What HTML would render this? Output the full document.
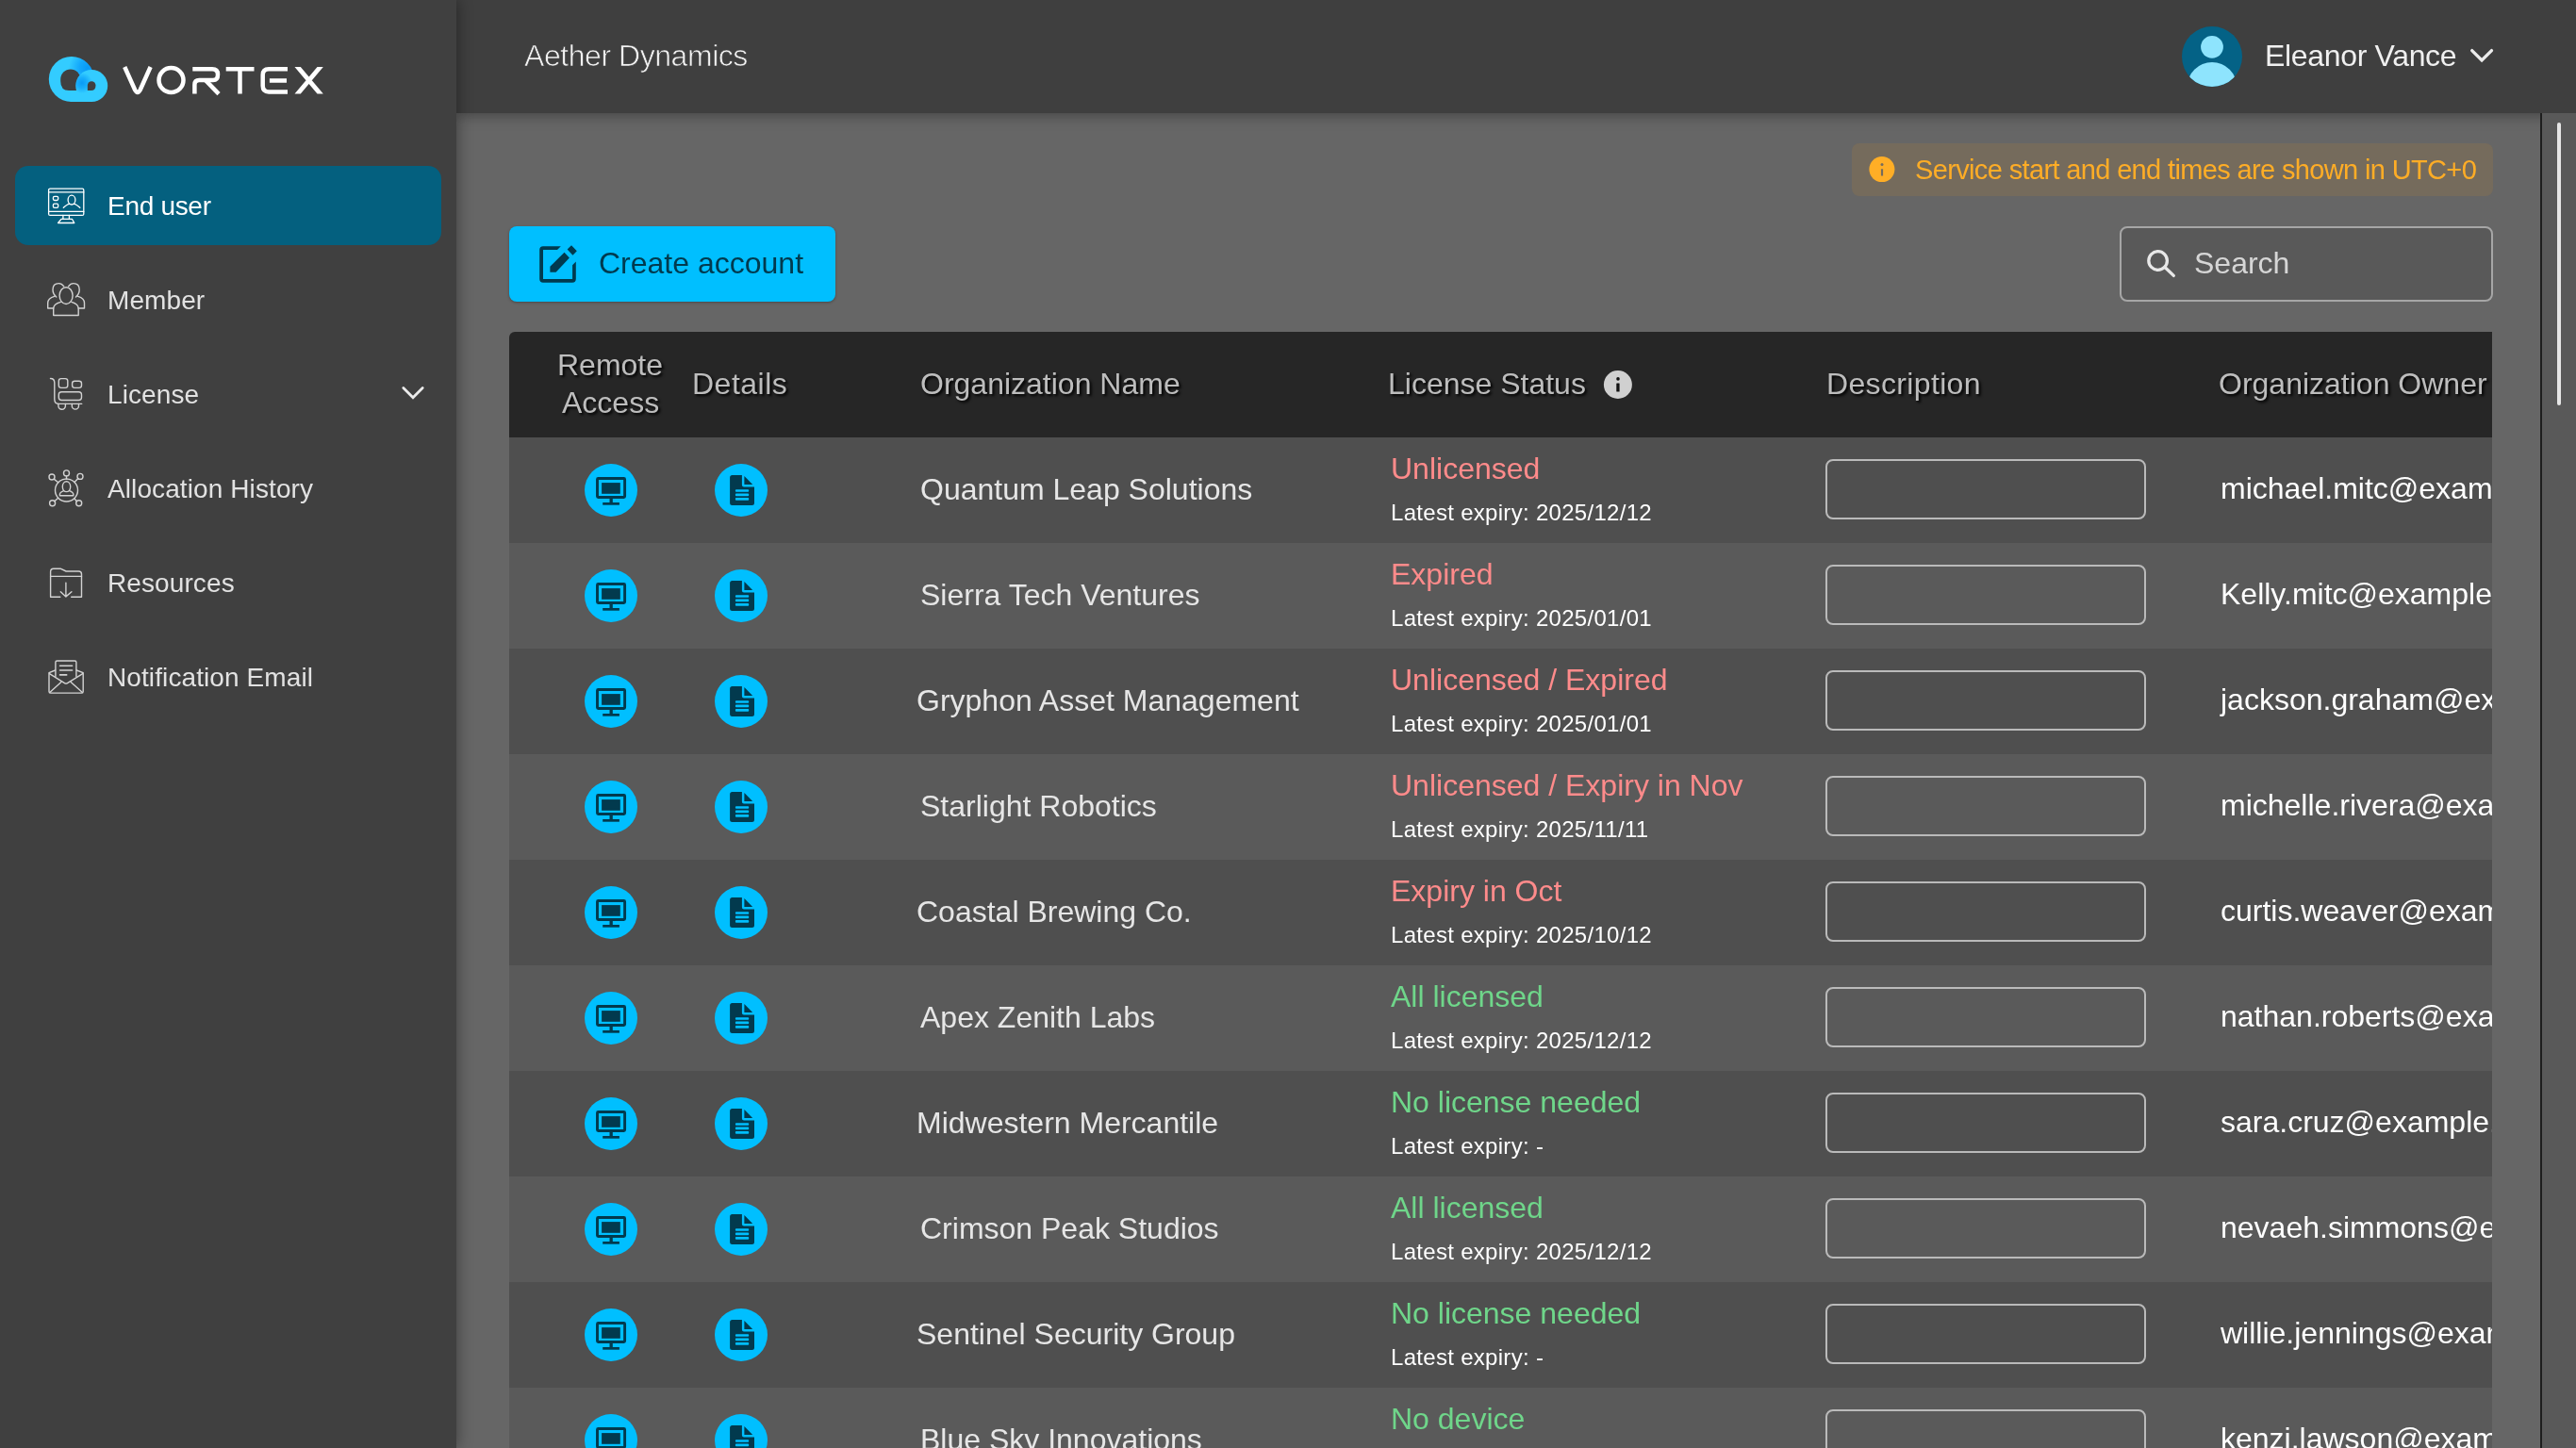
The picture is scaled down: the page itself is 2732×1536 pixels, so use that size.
<!DOCTYPE html><html><head><meta charset="utf-8"><style>
*{margin:0;padding:0;box-sizing:border-box}
html,body{width:2732px;height:1536px;overflow:hidden;background:#666;font-family:"Liberation Sans",sans-serif;-webkit-font-smoothing:antialiased}
.t{position:absolute;line-height:1;white-space:nowrap;will-change:transform}
.a{position:absolute}
#side{position:absolute;left:0;top:0;width:484px;height:1536px;background:#404040;z-index:3;box-shadow:2px 0 14px rgba(0,0,0,.35)}
#head{position:absolute;left:484px;top:0;width:2248px;height:120px;background:#3f3f3f;z-index:2;box-shadow:0 2px 14px rgba(0,0,0,.35)}
#main{position:absolute;left:484px;top:120px;width:2248px;height:1416px;background:#666;overflow:hidden;z-index:1}
.row{position:absolute;left:540px;width:2103px;height:112px;overflow:hidden}
.ic{position:absolute;width:56px;height:56px;border-radius:50%;background:#00bfff}
.desc{position:absolute;left:1936px;width:340px;height:64px;border:2px solid #bababa;border-radius:8px}
</style></head><body>
<div id="side">
<svg class="a" style="left:0;top:0" width="484" height="130" viewBox="0 0 484 130">
<defs>
<radialGradient id="g1" gradientUnits="userSpaceOnUse" cx="93" cy="72" r="20"><stop offset="0" stop-color="#0898f5"/><stop offset="0.45" stop-color="#14a8fb"/><stop offset="1" stop-color="#33ccff"/></radialGradient>
<radialGradient id="g2" gradientUnits="userSpaceOnUse" cx="87" cy="88" r="11"><stop offset="0" stop-color="#0a9af6"/><stop offset="0.5" stop-color="#18aefc"/><stop offset="1" stop-color="#33ccff"/></radialGradient>
</defs>
<circle cx="75.8" cy="84" r="24" fill="url(#g1)"/>
<rect x="74.6" y="84" width="22.4" height="24" fill="#33ccff"/>
<path d="M64.2 84 A10.6 10.6 0 0 1 85.4 84 V96 H73 Q64.2 96 64.2 86 Z" fill="#404040"/>
<circle cx="97.2" cy="91" r="17" fill="url(#g2)"/>
<path d="M92.8 96 V90.7 A4.35 4.35 0 0 1 101.5 90.7 Q101.5 96 96.5 96 Z" fill="#404040"/>
<g fill="none" stroke="#fff" stroke-width="4.5" stroke-linejoin="round">
<path d="M132.2 71 L143.2 95.5 Q145.9 100.5 148.6 95.5 L159.6 71" stroke-linecap="butt"/>
<circle cx="181.5" cy="85" r="13"/>
<path d="M206.4 99.6 V90 Q206.4 85.1 211.3 85.1 H226 Q231 85.1 231 79 Q231 73.2 225 73.2 H204.3"/>
<path d="M218 85.1 L232 99.6" stroke-linejoin="miter"/>
<path d="M239.7 73.2 H269.5 M254.5 73.2 V99.6"/>
<path d="M305 73.2 H285 Q278.7 73.2 278.7 79.5 V91 Q278.7 97.4 285 97.4 H305 M285.9 85.4 H304"/>
</g><g fill="#fff"><path d="M312.5 71 H318.8 L342.8 99.5 H336.5 Z M336.5 71 H342.8 L318.8 99.5 H312.5 Z"/>
</g>
</svg>
<div class="a" style="left:16px;top:176px;width:452px;height:84px;background:#04607f;border-radius:14px"></div>
<div class="t" style="left:114px;top:204.8px;font-size:28px;color:#ffffff;letter-spacing:-0.3px">End user</div>
<div class="t" style="left:114px;top:304.8px;font-size:28px;color:#e2e2e2;letter-spacing:0.1px">Member</div>
<div class="t" style="left:114px;top:404.8px;font-size:28px;color:#e2e2e2;letter-spacing:0.1px">License</div>
<div class="t" style="left:114px;top:504.8px;font-size:28px;color:#e2e2e2;letter-spacing:0.1px">Allocation History</div>
<div class="t" style="left:114px;top:604.8px;font-size:28px;color:#e2e2e2;letter-spacing:0.1px">Resources</div>
<div class="t" style="left:114px;top:704.8px;font-size:28px;color:#e2e2e2;letter-spacing:0.1px">Notification Email</div>
<svg class="a" style="left:44px;top:192px" width="54" height="54" viewBox="0 0 54 54"><g fill="none" stroke="#ffffff" stroke-width="1.3" stroke-linecap="round" stroke-linejoin="round">
<rect x="7.6" y="8.1" width="37.2" height="28.3" rx="1.5"/>
<path d="M7.6 11.9 H44.8 M7.6 32.4 H44.8"/>
<rect x="12.4" y="16.4" width="5.3" height="4.1" rx="1.4"/>
<rect x="12.4" y="24.2" width="5.3" height="4.1" rx="1.4"/>
<ellipse cx="32" cy="20.1" rx="3.9" ry="4.9"/>
<path d="M23.3 28.3 Q27 24.5 29.8 24.3 M34.3 24.3 Q37 24.5 40.8 28.3"/>
<path d="M22.9 36.4 V40.3 M29.4 36.4 V40.3 M21 40.3 H32.4 L34.8 44.5 H17.6 Z"/>
</g></svg>
<svg class="a" style="left:44px;top:292px" width="54" height="54" viewBox="0 0 54 54"><g fill="none" stroke="#d2d2d2" stroke-width="1.4" stroke-linecap="round" stroke-linejoin="round">
<ellipse cx="26.1" cy="21.6" rx="7" ry="8.9"/>
<path d="M20.3 28.4 Q12.7 30.5 12.7 35.5 V42.5 H39.2 V35.5 Q39.2 30.5 31.9 28.4"/>
<path d="M23.8 11.8 Q21.5 8.6 18.3 8.6 Q12 8.6 12 15.3 Q12 19.8 15.7 23"/>
<path d="M13.8 22.4 Q6.7 24.5 6.7 29.2 V35 H12.7"/>
<path d="M28.5 11.8 Q30.8 8.6 33.9 8.6 Q40.2 8.6 40.2 15.3 Q40.2 19.8 36.5 23"/>
<path d="M38.6 22.4 Q45.5 24.5 45.5 29.2 V35 H39.2"/>
</g></svg>
<svg class="a" style="left:44px;top:392px" width="54" height="54" viewBox="0 0 54 54"><g fill="none" stroke="#d2d2d2" stroke-width="1.4" stroke-linecap="round" stroke-linejoin="round">
<path d="M9.5 9.5 Q13.8 9.5 13.8 14 V31.5 Q13.8 36.4 18.6 36.4 H42.7"/>
<rect x="18.3" y="9.6" width="9.5" height="9.8" rx="2.6"/>
<rect x="32.6" y="12.2" width="9.9" height="7.2" rx="2.6"/>
<rect x="18.3" y="23.8" width="24.2" height="8.7" rx="3"/>
<path d="M17.9 36.4 V38.5 A3.75 3.75 0 0 0 25.4 38.5 V36.4"/>
<path d="M32.3 36.4 V38.5 A3.6 3.6 0 0 0 39.5 38.5 V36.4"/>
</g></svg>
<svg class="a" style="left:44px;top:492px" width="54" height="54" viewBox="0 0 54 54"><g fill="none" stroke="#d2d2d2" stroke-width="1.4" stroke-linecap="round" stroke-linejoin="round">
<circle cx="26.5" cy="28" r="12"/>
<ellipse cx="26.5" cy="24.2" rx="4.2" ry="5.4"/>
<path d="M23.6 28.6 Q19.4 30 19.4 32.6 V33.8 H33.8 V32.6 Q33.8 30 29.5 28.6"/>
<circle cx="26.5" cy="9.9" r="3"/><path d="M26.5 12.9 V16"/>
<circle cx="11" cy="14" r="3"/><path d="M13.2 16.1 L17.8 19.8"/>
<circle cx="41" cy="13.4" r="3"/><path d="M38.8 15.5 L35 19.5"/>
<circle cx="11.6" cy="41.8" r="3"/><path d="M13.8 39.8 L17.7 36.3"/>
<circle cx="39.7" cy="41.8" r="3"/><path d="M37.5 39.8 L35 37"/>
</g></svg>
<svg class="a" style="left:44px;top:592px" width="54" height="54" viewBox="0 0 54 54"><g fill="none" stroke="#d2d2d2" stroke-width="1.4" stroke-linecap="round" stroke-linejoin="round">
<path d="M19.8 41.2 H9.6 V14.5 Q9.6 11.2 12.6 11.2 H20.1 L26.1 14 H39.4 Q42.5 14 42.5 17 V41.2 H31.7"/>
<path d="M9.6 19.4 H42.5"/>
<path d="M25.9 26.1 V40.5 M20.3 35.8 L25.9 40.9 L31.9 35.8"/>
</g></svg>
<svg class="a" style="left:44px;top:692px" width="54" height="54" viewBox="0 0 54 54"><g fill="none" stroke="#d2d2d2" stroke-width="1.4" stroke-linecap="round" stroke-linejoin="round">
<path d="M14.9 25.5 V10.6 Q14.9 9 16.5 9 H35.3 Q36.9 9 36.9 10.6 V25.5"/>
<path d="M19.6 14.2 H32.6 M19.6 19 H32.6 M19.6 23.9 H26.7" stroke-width="1.6"/>
<path d="M14.6 19 L8 21.6 V41.6 Q8 43.1 9.6 43.1 H42.6 Q44.2 43.1 44.2 41.6 V21.6 L37.2 19"/>
<path d="M8.5 22.6 L24.5 32.6 Q26 33.6 27.5 32.6 L43.7 22.6"/>
<path d="M8.8 42.5 L20.9 31.6 M43.4 42.5 L31.1 31.6"/>
</g></svg>
<svg class="a" style="left:415px;top:400px" width="50" height="40"><path d="M12.8 11.6 L23 21.7 L33.2 11.6" fill="none" stroke="#ececec" stroke-width="2.8" stroke-linecap="round" stroke-linejoin="miter"/></svg>
</div>
<div id="head">
<div class="t" style="left:72px;top:43.3px;font-size:32px;color:#f2f2f2;letter-spacing:-0.45px;-webkit-text-stroke:0.7px #3f3f3f">Aether Dynamics</div>
<svg class="a" style="left:1830px;top:28px" width="64" height="64" viewBox="0 0 64 64">
<defs><clipPath id="av"><circle cx="32" cy="32" r="32"/></clipPath></defs>
<circle cx="32" cy="32" r="32" fill="#046286"/>
<g clip-path="url(#av)" fill="#8ee4fd"><circle cx="32" cy="21.8" r="11.9"/><circle cx="32" cy="64.3" r="26.4"/></g>
</svg>
<div class="t" style="left:1918px;top:43.3px;font-size:32px;color:#f0f0f0;letter-spacing:-0.33px">Eleanor Vance</div>
<svg class="a" style="left:2116px;top:35px" width="60" height="50"><path d="M21.7 18.6 L32.1 29 L42.5 18.6" fill="none" stroke="#ececec" stroke-width="3.3" stroke-linecap="round" stroke-linejoin="miter"/></svg>
</div>
<div id="main">
</div>
<div class="a" style="left:1964px;top:152px;width:680px;height:56px;background:#756b5c;border-radius:8px;z-index:1"></div>
<svg class="a" style="left:1970px;top:160px;z-index:1" width="60" height="40" viewBox="0 0 60 40">
<circle cx="25.9" cy="19.6" r="13.5" fill="#ffae26"/>
<circle cx="26" cy="14.6" r="1.5" fill="#756b5c"/><rect x="24.9" y="19.3" width="2.2" height="7.2" fill="#756b5c"/></svg>
<div class="t" style="left:2031px;top:166.1px;font-size:29px;color:#ffad26;z-index:1;letter-spacing:-0.64px">Service start and end times are shown in UTC+0</div>
<div class="a" style="left:540px;top:240px;width:346px;height:80px;background:#00bfff;border-radius:8px;z-index:1;box-shadow:0 1px 3px rgba(0,0,0,.3)"></div>
<svg class="a" style="left:560px;top:250px;z-index:1" width="70" height="60" viewBox="0 0 70 60">
<path d="M34.8 11.2 H16 Q12.2 11.2 12.2 15 V46 Q12.2 49.7 16 49.7 H47 Q50.8 49.7 50.8 46 V27.4 L47.1 31.2 V46 H16 V15 H31 Z" fill="#013a4f"/>
<path d="M23.4 32.7 L38.5 17.8 L43.9 23.4 L29.6 38.7 H23.4 Z" fill="#013a4f"/>
<path d="M41.6 14.5 L46 10.2 L51.8 16.2 L47.5 20.7 Z" fill="#013a4f"/>
</svg>
<div class="t" style="left:635px;top:262.9px;font-size:32px;color:#013a4f;z-index:1">Create account</div>
<div class="a" style="left:2248px;top:240px;width:396px;height:80px;background:#595959;border:2px solid #a6a6a6;border-radius:8px;z-index:1"></div>
<svg class="a" style="left:2260px;top:250px;z-index:1" width="60" height="60" viewBox="0 0 60 60">
<circle cx="28.6" cy="26.5" r="9.8" fill="none" stroke="#e8e8e8" stroke-width="3.3"/>
<path d="M36 33.5 L45.3 42.4" stroke="#e8e8e8" stroke-width="3.3" stroke-linecap="round"/></svg>
<div class="t" style="left:2327px;top:262.9px;font-size:32px;color:#d6d6d6;z-index:1">Search</div>
<div class="a" style="left:540px;top:352px;width:2103px;height:112px;background:#262626;border-radius:6px 0 0 0;z-index:1"></div>
<div class="t" style="left:591px;top:370.9px;font-size:32px;color:#bdbdbd;z-index:1;text-shadow:2px 2px 3px #000">Remote</div>
<div class="t" style="left:596px;top:410.9px;font-size:32px;color:#bdbdbd;z-index:1;text-shadow:2px 2px 3px #000">Access</div>
<div class="t" style="left:734px;top:390.9px;font-size:32px;color:#bdbdbd;z-index:1;text-shadow:2px 2px 3px #000;letter-spacing:0.5px">Details</div>
<div class="t" style="left:976px;top:390.9px;font-size:32px;color:#bdbdbd;z-index:1;text-shadow:2px 2px 3px #000">Organization Name</div>
<div class="t" style="left:1471.5px;top:390.9px;font-size:32px;color:#bdbdbd;z-index:1;text-shadow:2px 2px 3px #000">License Status</div>
<svg class="a" style="left:1690px;top:390px;z-index:1" width="50" height="40" viewBox="0 0 50 40">
<circle cx="25.9" cy="18" r="15" fill="#d0d0d0"/>
<circle cx="26" cy="11.9" r="1.8" fill="#111"/><rect x="24.3" y="16.6" width="3.3" height="8.8" rx="0.5" fill="#111"/></svg>
<div class="t" style="left:1937px;top:390.9px;font-size:32px;color:#bdbdbd;z-index:1;text-shadow:2px 2px 3px #000;letter-spacing:0.35px">Description</div>
<div class="t" style="left:2353px;top:390.9px;font-size:32px;color:#bdbdbd;z-index:1;text-shadow:2px 2px 3px #000">Organization Owner</div>
<div class="row" style="top:464px;background:#4f4f4f;z-index:1">
<svg class="a" style="left:76px;top:24px" width="64" height="64" viewBox="0 0 64 64">
<circle cx="32" cy="32" r="28" fill="#00bfff"/>
<rect x="17.5" y="19.5" width="29.1" height="20" rx="1" fill="none" stroke="#023a4e" stroke-width="2.9"/>
<rect x="22.1" y="24.1" width="19.7" height="11.7" fill="#023a4e"/>
<rect x="30.5" y="40" width="3.3" height="5" fill="#023a4e"/>
<rect x="23.2" y="45" width="17.7" height="2.7" fill="#023a4e"/>
</svg>
<svg class="a" style="left:214px;top:24px" width="64" height="64" viewBox="0 0 64 64">
<circle cx="32" cy="32" r="28" fill="#00bfff"/>
<path d="M22.6 16.1 H32.9 V26.5 Q32.9 28.6 35 28.6 H46 V45.5 Q46 48 43.5 48 H22.6 Q20.1 48 20.1 45.5 V18.6 Q20.1 16.1 22.6 16.1 Z" fill="#023a4e"/>
<path d="M35.4 17 V25.9 H44.2 Z" fill="#023a4e"/>
<rect x="25.9" y="31.2" width="14.3" height="2.6" rx="1" fill="#00bfff"/>
<rect x="25.9" y="35.6" width="14.3" height="2.6" rx="1" fill="#00bfff"/>
<rect x="25.9" y="40" width="14.3" height="2.7" rx="1" fill="#00bfff"/>
</svg>
<div class="t" style="left:436px;top:38.7px;font-size:32px;color:#e6e6e6;">Quantum Leap Solutions</div>
<div class="t" style="left:935px;top:16.9px;font-size:32px;color:#ff8b8b;">Unlicensed</div>
<div class="t" style="left:935px;top:67.7px;font-size:24px;color:#ffffff;letter-spacing:0.3px">Latest expiry: 2025/12/12</div>
<div class="desc" style="left:1396px;top:23px"></div>
<div class="t" style="left:1815px;top:38.4px;font-size:32px;color:#ffffff;">michael.mitc@example.com</div>
</div>
<div class="row" style="top:576px;background:#5a5a5a;z-index:1">
<svg class="a" style="left:76px;top:24px" width="64" height="64" viewBox="0 0 64 64">
<circle cx="32" cy="32" r="28" fill="#00bfff"/>
<rect x="17.5" y="19.5" width="29.1" height="20" rx="1" fill="none" stroke="#023a4e" stroke-width="2.9"/>
<rect x="22.1" y="24.1" width="19.7" height="11.7" fill="#023a4e"/>
<rect x="30.5" y="40" width="3.3" height="5" fill="#023a4e"/>
<rect x="23.2" y="45" width="17.7" height="2.7" fill="#023a4e"/>
</svg>
<svg class="a" style="left:214px;top:24px" width="64" height="64" viewBox="0 0 64 64">
<circle cx="32" cy="32" r="28" fill="#00bfff"/>
<path d="M22.6 16.1 H32.9 V26.5 Q32.9 28.6 35 28.6 H46 V45.5 Q46 48 43.5 48 H22.6 Q20.1 48 20.1 45.5 V18.6 Q20.1 16.1 22.6 16.1 Z" fill="#023a4e"/>
<path d="M35.4 17 V25.9 H44.2 Z" fill="#023a4e"/>
<rect x="25.9" y="31.2" width="14.3" height="2.6" rx="1" fill="#00bfff"/>
<rect x="25.9" y="35.6" width="14.3" height="2.6" rx="1" fill="#00bfff"/>
<rect x="25.9" y="40" width="14.3" height="2.7" rx="1" fill="#00bfff"/>
</svg>
<div class="t" style="left:436px;top:38.7px;font-size:32px;color:#e6e6e6;">Sierra Tech Ventures</div>
<div class="t" style="left:935px;top:16.9px;font-size:32px;color:#ff8b8b;">Expired</div>
<div class="t" style="left:935px;top:67.7px;font-size:24px;color:#ffffff;letter-spacing:0.3px">Latest expiry: 2025/01/01</div>
<div class="desc" style="left:1396px;top:23px"></div>
<div class="t" style="left:1815px;top:38.4px;font-size:32px;color:#ffffff;">Kelly.mitc@example.com</div>
</div>
<div class="row" style="top:688px;background:#4f4f4f;z-index:1">
<svg class="a" style="left:76px;top:24px" width="64" height="64" viewBox="0 0 64 64">
<circle cx="32" cy="32" r="28" fill="#00bfff"/>
<rect x="17.5" y="19.5" width="29.1" height="20" rx="1" fill="none" stroke="#023a4e" stroke-width="2.9"/>
<rect x="22.1" y="24.1" width="19.7" height="11.7" fill="#023a4e"/>
<rect x="30.5" y="40" width="3.3" height="5" fill="#023a4e"/>
<rect x="23.2" y="45" width="17.7" height="2.7" fill="#023a4e"/>
</svg>
<svg class="a" style="left:214px;top:24px" width="64" height="64" viewBox="0 0 64 64">
<circle cx="32" cy="32" r="28" fill="#00bfff"/>
<path d="M22.6 16.1 H32.9 V26.5 Q32.9 28.6 35 28.6 H46 V45.5 Q46 48 43.5 48 H22.6 Q20.1 48 20.1 45.5 V18.6 Q20.1 16.1 22.6 16.1 Z" fill="#023a4e"/>
<path d="M35.4 17 V25.9 H44.2 Z" fill="#023a4e"/>
<rect x="25.9" y="31.2" width="14.3" height="2.6" rx="1" fill="#00bfff"/>
<rect x="25.9" y="35.6" width="14.3" height="2.6" rx="1" fill="#00bfff"/>
<rect x="25.9" y="40" width="14.3" height="2.7" rx="1" fill="#00bfff"/>
</svg>
<div class="t" style="left:432px;top:38.7px;font-size:32px;color:#e6e6e6;">Gryphon Asset Management</div>
<div class="t" style="left:935px;top:16.9px;font-size:32px;color:#ff8b8b;">Unlicensed / Expired</div>
<div class="t" style="left:935px;top:67.7px;font-size:24px;color:#ffffff;letter-spacing:0.3px">Latest expiry: 2025/01/01</div>
<div class="desc" style="left:1396px;top:23px"></div>
<div class="t" style="left:1815px;top:38.4px;font-size:32px;color:#ffffff;">jackson.graham@example.com</div>
</div>
<div class="row" style="top:800px;background:#5a5a5a;z-index:1">
<svg class="a" style="left:76px;top:24px" width="64" height="64" viewBox="0 0 64 64">
<circle cx="32" cy="32" r="28" fill="#00bfff"/>
<rect x="17.5" y="19.5" width="29.1" height="20" rx="1" fill="none" stroke="#023a4e" stroke-width="2.9"/>
<rect x="22.1" y="24.1" width="19.7" height="11.7" fill="#023a4e"/>
<rect x="30.5" y="40" width="3.3" height="5" fill="#023a4e"/>
<rect x="23.2" y="45" width="17.7" height="2.7" fill="#023a4e"/>
</svg>
<svg class="a" style="left:214px;top:24px" width="64" height="64" viewBox="0 0 64 64">
<circle cx="32" cy="32" r="28" fill="#00bfff"/>
<path d="M22.6 16.1 H32.9 V26.5 Q32.9 28.6 35 28.6 H46 V45.5 Q46 48 43.5 48 H22.6 Q20.1 48 20.1 45.5 V18.6 Q20.1 16.1 22.6 16.1 Z" fill="#023a4e"/>
<path d="M35.4 17 V25.9 H44.2 Z" fill="#023a4e"/>
<rect x="25.9" y="31.2" width="14.3" height="2.6" rx="1" fill="#00bfff"/>
<rect x="25.9" y="35.6" width="14.3" height="2.6" rx="1" fill="#00bfff"/>
<rect x="25.9" y="40" width="14.3" height="2.7" rx="1" fill="#00bfff"/>
</svg>
<div class="t" style="left:436px;top:38.7px;font-size:32px;color:#e6e6e6;">Starlight Robotics</div>
<div class="t" style="left:935px;top:16.9px;font-size:32px;color:#ff8b8b;">Unlicensed / Expiry in Nov</div>
<div class="t" style="left:935px;top:67.7px;font-size:24px;color:#ffffff;letter-spacing:0.3px">Latest expiry: 2025/11/11</div>
<div class="desc" style="left:1396px;top:23px"></div>
<div class="t" style="left:1815px;top:38.4px;font-size:32px;color:#ffffff;">michelle.rivera@example.com</div>
</div>
<div class="row" style="top:912px;background:#4f4f4f;z-index:1">
<svg class="a" style="left:76px;top:24px" width="64" height="64" viewBox="0 0 64 64">
<circle cx="32" cy="32" r="28" fill="#00bfff"/>
<rect x="17.5" y="19.5" width="29.1" height="20" rx="1" fill="none" stroke="#023a4e" stroke-width="2.9"/>
<rect x="22.1" y="24.1" width="19.7" height="11.7" fill="#023a4e"/>
<rect x="30.5" y="40" width="3.3" height="5" fill="#023a4e"/>
<rect x="23.2" y="45" width="17.7" height="2.7" fill="#023a4e"/>
</svg>
<svg class="a" style="left:214px;top:24px" width="64" height="64" viewBox="0 0 64 64">
<circle cx="32" cy="32" r="28" fill="#00bfff"/>
<path d="M22.6 16.1 H32.9 V26.5 Q32.9 28.6 35 28.6 H46 V45.5 Q46 48 43.5 48 H22.6 Q20.1 48 20.1 45.5 V18.6 Q20.1 16.1 22.6 16.1 Z" fill="#023a4e"/>
<path d="M35.4 17 V25.9 H44.2 Z" fill="#023a4e"/>
<rect x="25.9" y="31.2" width="14.3" height="2.6" rx="1" fill="#00bfff"/>
<rect x="25.9" y="35.6" width="14.3" height="2.6" rx="1" fill="#00bfff"/>
<rect x="25.9" y="40" width="14.3" height="2.7" rx="1" fill="#00bfff"/>
</svg>
<div class="t" style="left:432px;top:38.7px;font-size:32px;color:#e6e6e6;">Coastal Brewing Co.</div>
<div class="t" style="left:935px;top:16.9px;font-size:32px;color:#ff8b8b;">Expiry in Oct</div>
<div class="t" style="left:935px;top:67.7px;font-size:24px;color:#ffffff;letter-spacing:0.3px">Latest expiry: 2025/10/12</div>
<div class="desc" style="left:1396px;top:23px"></div>
<div class="t" style="left:1815px;top:38.4px;font-size:32px;color:#ffffff;">curtis.weaver@example.com</div>
</div>
<div class="row" style="top:1024px;background:#5a5a5a;z-index:1">
<svg class="a" style="left:76px;top:24px" width="64" height="64" viewBox="0 0 64 64">
<circle cx="32" cy="32" r="28" fill="#00bfff"/>
<rect x="17.5" y="19.5" width="29.1" height="20" rx="1" fill="none" stroke="#023a4e" stroke-width="2.9"/>
<rect x="22.1" y="24.1" width="19.7" height="11.7" fill="#023a4e"/>
<rect x="30.5" y="40" width="3.3" height="5" fill="#023a4e"/>
<rect x="23.2" y="45" width="17.7" height="2.7" fill="#023a4e"/>
</svg>
<svg class="a" style="left:214px;top:24px" width="64" height="64" viewBox="0 0 64 64">
<circle cx="32" cy="32" r="28" fill="#00bfff"/>
<path d="M22.6 16.1 H32.9 V26.5 Q32.9 28.6 35 28.6 H46 V45.5 Q46 48 43.5 48 H22.6 Q20.1 48 20.1 45.5 V18.6 Q20.1 16.1 22.6 16.1 Z" fill="#023a4e"/>
<path d="M35.4 17 V25.9 H44.2 Z" fill="#023a4e"/>
<rect x="25.9" y="31.2" width="14.3" height="2.6" rx="1" fill="#00bfff"/>
<rect x="25.9" y="35.6" width="14.3" height="2.6" rx="1" fill="#00bfff"/>
<rect x="25.9" y="40" width="14.3" height="2.7" rx="1" fill="#00bfff"/>
</svg>
<div class="t" style="left:436px;top:38.7px;font-size:32px;color:#e6e6e6;">Apex Zenith Labs</div>
<div class="t" style="left:935px;top:16.9px;font-size:32px;color:#6fd68a;">All licensed</div>
<div class="t" style="left:935px;top:67.7px;font-size:24px;color:#ffffff;letter-spacing:0.3px">Latest expiry: 2025/12/12</div>
<div class="desc" style="left:1396px;top:23px"></div>
<div class="t" style="left:1815px;top:38.4px;font-size:32px;color:#ffffff;">nathan.roberts@example.com</div>
</div>
<div class="row" style="top:1136px;background:#4f4f4f;z-index:1">
<svg class="a" style="left:76px;top:24px" width="64" height="64" viewBox="0 0 64 64">
<circle cx="32" cy="32" r="28" fill="#00bfff"/>
<rect x="17.5" y="19.5" width="29.1" height="20" rx="1" fill="none" stroke="#023a4e" stroke-width="2.9"/>
<rect x="22.1" y="24.1" width="19.7" height="11.7" fill="#023a4e"/>
<rect x="30.5" y="40" width="3.3" height="5" fill="#023a4e"/>
<rect x="23.2" y="45" width="17.7" height="2.7" fill="#023a4e"/>
</svg>
<svg class="a" style="left:214px;top:24px" width="64" height="64" viewBox="0 0 64 64">
<circle cx="32" cy="32" r="28" fill="#00bfff"/>
<path d="M22.6 16.1 H32.9 V26.5 Q32.9 28.6 35 28.6 H46 V45.5 Q46 48 43.5 48 H22.6 Q20.1 48 20.1 45.5 V18.6 Q20.1 16.1 22.6 16.1 Z" fill="#023a4e"/>
<path d="M35.4 17 V25.9 H44.2 Z" fill="#023a4e"/>
<rect x="25.9" y="31.2" width="14.3" height="2.6" rx="1" fill="#00bfff"/>
<rect x="25.9" y="35.6" width="14.3" height="2.6" rx="1" fill="#00bfff"/>
<rect x="25.9" y="40" width="14.3" height="2.7" rx="1" fill="#00bfff"/>
</svg>
<div class="t" style="left:432px;top:38.7px;font-size:32px;color:#e6e6e6;">Midwestern Mercantile</div>
<div class="t" style="left:935px;top:16.9px;font-size:32px;color:#6fd68a;">No license needed</div>
<div class="t" style="left:935px;top:67.7px;font-size:24px;color:#ffffff;letter-spacing:0.3px">Latest expiry: -</div>
<div class="desc" style="left:1396px;top:23px"></div>
<div class="t" style="left:1815px;top:38.4px;font-size:32px;color:#ffffff;">sara.cruz@example.com</div>
</div>
<div class="row" style="top:1248px;background:#5a5a5a;z-index:1">
<svg class="a" style="left:76px;top:24px" width="64" height="64" viewBox="0 0 64 64">
<circle cx="32" cy="32" r="28" fill="#00bfff"/>
<rect x="17.5" y="19.5" width="29.1" height="20" rx="1" fill="none" stroke="#023a4e" stroke-width="2.9"/>
<rect x="22.1" y="24.1" width="19.7" height="11.7" fill="#023a4e"/>
<rect x="30.5" y="40" width="3.3" height="5" fill="#023a4e"/>
<rect x="23.2" y="45" width="17.7" height="2.7" fill="#023a4e"/>
</svg>
<svg class="a" style="left:214px;top:24px" width="64" height="64" viewBox="0 0 64 64">
<circle cx="32" cy="32" r="28" fill="#00bfff"/>
<path d="M22.6 16.1 H32.9 V26.5 Q32.9 28.6 35 28.6 H46 V45.5 Q46 48 43.5 48 H22.6 Q20.1 48 20.1 45.5 V18.6 Q20.1 16.1 22.6 16.1 Z" fill="#023a4e"/>
<path d="M35.4 17 V25.9 H44.2 Z" fill="#023a4e"/>
<rect x="25.9" y="31.2" width="14.3" height="2.6" rx="1" fill="#00bfff"/>
<rect x="25.9" y="35.6" width="14.3" height="2.6" rx="1" fill="#00bfff"/>
<rect x="25.9" y="40" width="14.3" height="2.7" rx="1" fill="#00bfff"/>
</svg>
<div class="t" style="left:436px;top:38.7px;font-size:32px;color:#e6e6e6;">Crimson Peak Studios</div>
<div class="t" style="left:935px;top:16.9px;font-size:32px;color:#6fd68a;">All licensed</div>
<div class="t" style="left:935px;top:67.7px;font-size:24px;color:#ffffff;letter-spacing:0.3px">Latest expiry: 2025/12/12</div>
<div class="desc" style="left:1396px;top:23px"></div>
<div class="t" style="left:1815px;top:38.4px;font-size:32px;color:#ffffff;">nevaeh.simmons@example.com</div>
</div>
<div class="row" style="top:1360px;background:#4f4f4f;z-index:1">
<svg class="a" style="left:76px;top:24px" width="64" height="64" viewBox="0 0 64 64">
<circle cx="32" cy="32" r="28" fill="#00bfff"/>
<rect x="17.5" y="19.5" width="29.1" height="20" rx="1" fill="none" stroke="#023a4e" stroke-width="2.9"/>
<rect x="22.1" y="24.1" width="19.7" height="11.7" fill="#023a4e"/>
<rect x="30.5" y="40" width="3.3" height="5" fill="#023a4e"/>
<rect x="23.2" y="45" width="17.7" height="2.7" fill="#023a4e"/>
</svg>
<svg class="a" style="left:214px;top:24px" width="64" height="64" viewBox="0 0 64 64">
<circle cx="32" cy="32" r="28" fill="#00bfff"/>
<path d="M22.6 16.1 H32.9 V26.5 Q32.9 28.6 35 28.6 H46 V45.5 Q46 48 43.5 48 H22.6 Q20.1 48 20.1 45.5 V18.6 Q20.1 16.1 22.6 16.1 Z" fill="#023a4e"/>
<path d="M35.4 17 V25.9 H44.2 Z" fill="#023a4e"/>
<rect x="25.9" y="31.2" width="14.3" height="2.6" rx="1" fill="#00bfff"/>
<rect x="25.9" y="35.6" width="14.3" height="2.6" rx="1" fill="#00bfff"/>
<rect x="25.9" y="40" width="14.3" height="2.7" rx="1" fill="#00bfff"/>
</svg>
<div class="t" style="left:432px;top:38.7px;font-size:32px;color:#e6e6e6;">Sentinel Security Group</div>
<div class="t" style="left:935px;top:16.9px;font-size:32px;color:#6fd68a;">No license needed</div>
<div class="t" style="left:935px;top:67.7px;font-size:24px;color:#ffffff;letter-spacing:0.3px">Latest expiry: -</div>
<div class="desc" style="left:1396px;top:23px"></div>
<div class="t" style="left:1815px;top:38.4px;font-size:32px;color:#ffffff;">willie.jennings@example.com</div>
</div>
<div class="row" style="top:1472px;background:#5a5a5a;z-index:1">
<svg class="a" style="left:76px;top:24px" width="64" height="64" viewBox="0 0 64 64">
<circle cx="32" cy="32" r="28" fill="#00bfff"/>
<rect x="17.5" y="19.5" width="29.1" height="20" rx="1" fill="none" stroke="#023a4e" stroke-width="2.9"/>
<rect x="22.1" y="24.1" width="19.7" height="11.7" fill="#023a4e"/>
<rect x="30.5" y="40" width="3.3" height="5" fill="#023a4e"/>
<rect x="23.2" y="45" width="17.7" height="2.7" fill="#023a4e"/>
</svg>
<svg class="a" style="left:214px;top:24px" width="64" height="64" viewBox="0 0 64 64">
<circle cx="32" cy="32" r="28" fill="#00bfff"/>
<path d="M22.6 16.1 H32.9 V26.5 Q32.9 28.6 35 28.6 H46 V45.5 Q46 48 43.5 48 H22.6 Q20.1 48 20.1 45.5 V18.6 Q20.1 16.1 22.6 16.1 Z" fill="#023a4e"/>
<path d="M35.4 17 V25.9 H44.2 Z" fill="#023a4e"/>
<rect x="25.9" y="31.2" width="14.3" height="2.6" rx="1" fill="#00bfff"/>
<rect x="25.9" y="35.6" width="14.3" height="2.6" rx="1" fill="#00bfff"/>
<rect x="25.9" y="40" width="14.3" height="2.7" rx="1" fill="#00bfff"/>
</svg>
<div class="t" style="left:436px;top:38.7px;font-size:32px;color:#e6e6e6;">Blue Sky Innovations</div>
<div class="t" style="left:935px;top:16.9px;font-size:32px;color:#6fd68a;">No device</div>
<div class="t" style="left:935px;top:67.7px;font-size:24px;color:#ffffff;letter-spacing:0.3px">Latest expiry: -</div>
<div class="desc" style="left:1396px;top:23px"></div>
<div class="t" style="left:1815px;top:38.4px;font-size:32px;color:#ffffff;">kenzi.lawson@example.com</div>
</div>
<div class="a" style="left:2694px;top:120px;width:2px;height:1416px;background:#1e1e1e;z-index:2"></div>
<div class="a" style="left:2696px;top:120px;width:36px;height:1416px;background:#595959;z-index:2"></div>
<div class="a" style="left:2712px;top:130px;width:4px;height:300px;background:#e6e6e6;border-radius:2px;z-index:2"></div>
</body></html>
